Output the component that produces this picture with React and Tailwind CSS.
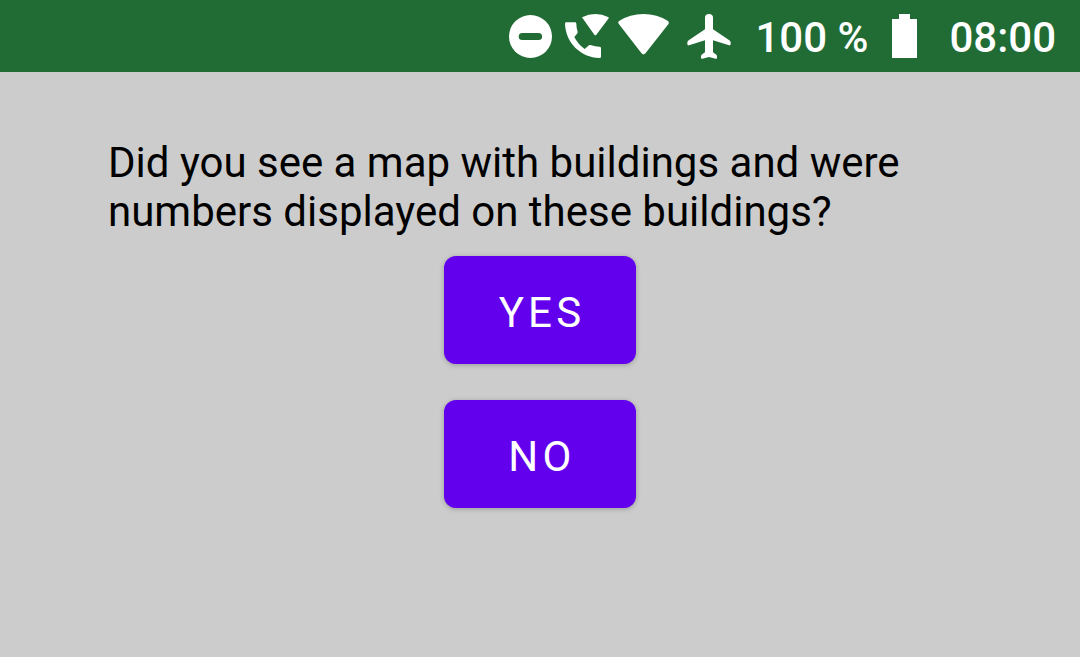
function DoNotDisturbIcon() {
  return (
    <svg viewBox="0 0 43 43" className="size-[43px] shrink-0" fill="#fff" role="img" aria-label="Do not disturb">
      <path fillRule="evenodd" d="M21.5 0a21.5 21.5 0 1 1 0 43a21.5 21.5 0 0 1 0-43zM13.2 18a3.5 3.5 0 0 0 0 7h16.4a3.5 3.5 0 0 0 0-7z" />
    </svg>
  );
}

function WifiCallIcon() {
  return (
    <svg viewBox="0 0 132 132" className="size-11 shrink-0" fill="#fff" role="img" aria-label="Wi-Fi calling">
      <path d="M4 25H30Q34 25 34 29Q34 41 38 53Q39 56 36 59L28 69Q39 91 59 105L72 94Q75 92 79 94Q90 98 103 98Q108 98 108 102V129Q108 132 103 132C48 130 2 87 0 29Q0 25 4 25z" />
      <path d="M53 13Q50 11 53 9Q70 0 91 0Q112 0 129 9Q133 11 130 14L94 62Q91 66 88 62z" />
    </svg>
  );
}

function WifiIcon() {
  return (
    <svg viewBox="0 0 154 124" className="h-[41px] w-[51px] shrink-0" fill="#fff" role="img" aria-label="Wi-Fi connected">
      <path d="M3 31Q-2 26 3 21Q36 0 77 0Q118 0 151 21Q156 26 152 31L83 119Q77 126 71 119z" />
    </svg>
  );
}

function AirplaneIcon() {
  return (
    <svg viewBox="0 0 132 135" className="h-[45px] w-11 shrink-0" fill="#fff" role="img" aria-label="Airplane mode">
      <path d="M54 11Q54 0 66 0Q78 0 78 11V46L127 79Q131 82 131 86V91Q131 95 126 94L78 79V115L88 122Q90 124 90 127V131Q90 135 86 134L66 129L46 134Q42 135 42 131V127Q42 124 44 122L54 115V79L6 94Q1 95 1 91V86Q1 82 5 79L54 46z" />
    </svg>
  );
}

function BatteryIcon() {
  return (
    <svg viewBox="0 0 25 44" className="h-11 w-[25px] shrink-0" fill="#fff" role="img" aria-label="Battery full">
      <path d="M7 0H18V5H25V44H0V5H7z" />
    </svg>
  );
}

function StatusBar() {
  return (
    <header className="flex h-[72px] items-center justify-end bg-[#216b35] pr-6 text-[42px] leading-[48px] font-medium text-white">
      <div className="flex items-center">
        <div className="mr-[13px] flex"><DoNotDisturbIcon /></div>
        <div className="mr-[9px] flex"><WifiCallIcon /></div>
        <div className="mr-[18px] flex pb-1"><WifiIcon /></div>
        <AirplaneIcon />
      </div>
      <span className="ml-6 pt-1 whitespace-nowrap">100 %</span>
      <div className="mr-8 ml-6 flex"><BatteryIcon /></div>
      <time className="pt-1">08:00</time>
    </header>
  );
}

function AnswerButton({ children }) {
  return (
    <button
      type="button"
      className="min-w-48 rounded-xl bg-[#6200ee] pt-[33px] pr-12 pb-[27px] pl-[52px] text-[42px] leading-[48px] font-normal tracking-widest text-white uppercase shadow-[0_1px_5px_rgba(0,0,0,0.25)]"
    >
      {children}
    </button>
  );
}

export default function App() {
  return (
    <div className="flex min-h-screen flex-col bg-[#cccccc] font-['Roboto',sans-serif]">
      <StatusBar />
      <main className="flex flex-col px-[10%] pt-[66px] pb-9">
        <h1 className="text-[42px] leading-[49px] font-normal text-black">
          Did you see a map with buildings and were numbers displayed on these buildings?
        </h1>
        <div className="mt-5 flex flex-col items-center gap-9">
          <AnswerButton>Yes</AnswerButton>
          <AnswerButton>No</AnswerButton>
        </div>
      </main>
    </div>
  );
}
